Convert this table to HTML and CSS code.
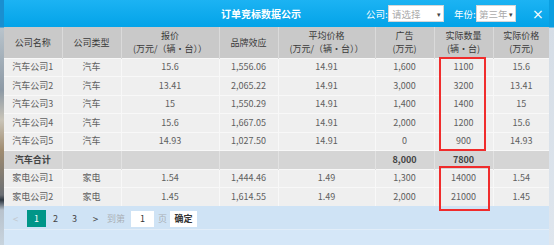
FILE: index.html
```html
<!DOCTYPE html>
<html lang="zh-CN">
<head>
<meta charset="utf-8">
<title>订单竞标数据公示</title>
<link rel="stylesheet" href="styles.css">
</head>
<body>
<div class="page">
  <div class="edge edge-left"></div>
  <div class="modal">
    <div class="titlebar">
      <div class="title">订单竞标数据公示</div>
      <div class="controls">
        <span class="lbl">公司:</span>
        <div class="select sel-company"><span class="ph">请选择</span><span class="arrow">▾</span></div>
        <span class="lbl">年份:</span>
        <div class="select sel-year"><span class="ph">第三年</span><span class="arrow">▾</span></div>
        <span class="close">×</span>
      </div>
    </div>
    <div class="tablewrap">
      <table class="grid">
        <colgroup>
          <col class="c1"><col class="c2"><col class="c3"><col class="c4"><col class="c5"><col class="c6"><col class="c7"><col class="c8">
        </colgroup>
        <thead>
          <tr>
            <th>公司名称</th>
            <th>公司类型</th>
            <th>报价<br>(万元/（辆•台））</th>
            <th>品牌效应</th>
            <th>平均价格<br>(万元/（辆•台））</th>
            <th>广告<br>(万元)</th>
            <th>实际数量<br>(辆•台)</th>
            <th>实际价格<br>(万元)</th>
          </tr>
        </thead>
        <tbody>
          <tr><td>汽车公司1</td><td>汽车</td><td>15.6</td><td>1,556.06</td><td>14.91</td><td>1,600</td><td>1100</td><td>15.6</td></tr>
          <tr><td>汽车公司2</td><td>汽车</td><td>13.41</td><td>2,065.22</td><td>14.91</td><td>3,000</td><td>3200</td><td>13.41</td></tr>
          <tr><td>汽车公司3</td><td>汽车</td><td>15</td><td>1,550.29</td><td>14.91</td><td>1,400</td><td>1400</td><td>15</td></tr>
          <tr><td>汽车公司4</td><td>汽车</td><td>15.6</td><td>1,667.05</td><td>14.91</td><td>2,000</td><td>1200</td><td>15.6</td></tr>
          <tr><td>汽车公司5</td><td>汽车</td><td>14.93</td><td>1,027.50</td><td>14.91</td><td>0</td><td>900</td><td>14.93</td></tr>
          <tr class="sum"><td>汽车合计</td><td></td><td></td><td></td><td></td><td>8,000</td><td>7800</td><td></td></tr>
          <tr><td>家电公司1</td><td>家电</td><td>1.54</td><td>1,444.46</td><td>1.49</td><td>1,300</td><td>14000</td><td>1.54</td></tr>
          <tr><td>家电公司2</td><td>家电</td><td>1.45</td><td>1,614.55</td><td>1.49</td><td>2,000</td><td>21000</td><td>1.45</td></tr>
        </tbody>
      </table>
      <div class="mark mark-a"></div>
      <div class="mark mark-b"></div>
    </div>
    <div class="pager">
      <span class="pg prev">&lt;</span>
      <span class="pg cur">1</span>
      <span class="pg">2</span>
      <span class="pg">3</span>
      <span class="pg next">&gt;</span>
      <span class="goto">到第</span>
      <span class="pinput">1</span>
      <span class="goto">页</span>
      <span class="ok">确定</span>
    </div>
    <div class="footer"></div>
  </div>
  <div class="edge edge-right"></div>
</div>
</body>
</html>
```

FILE: styles.css
```css
* { box-sizing: border-box; }
html, body { margin: 0; padding: 0; }
body {
  width: 554px;
  height: 245px;
  overflow: hidden;
  background: #dfe6ee;
  font-family: "Noto Sans CJK SC", "Noto Sans", sans-serif;
}
.page {
  display: flex;
  height: 245px;
}
.edge { flex: none; height: 245px; }
.edge-left {
  width: 4px;
  background: linear-gradient(#1a8fd0 0, #1a8fd0 27px, #b9c4cc 28px, #8d9aa6 90px, #c9c4b8 120px, #a08c70 150px, #6b6f74 195px, #2d3640 200px, #b8c2cc 210px, #c8d4de 245px);
}
.edge-right {
  width: 5px;
  background: linear-gradient(#0a9ee0 0, #0a9ee0 27px, #d5dde6 28px, #dfe6ee 245px);
}
.modal {
  flex: none;
  width: 545px;
  display: flex;
  flex-direction: column;
  background: #cfe3f5;
}
.titlebar {
  height: 27px;
  display: flex;
  align-items: center;
  background: linear-gradient(#1cb3f3, #03a3e8);
  color: #fff;
  white-space: nowrap;
}
.title {
  flex: none;
  width: 362px;
  padding-left: 217px;
  font-size: 10px;
  font-weight: bold;
}
.controls {
  flex: none;
  display: flex;
  align-items: center;
  height: 27px;
}
.controls > * { flex: none; }
.lbl {
  font-size: 9.5px;
  width: 22px;
}
.select {
  height: 17px;
  background: #fff;
  border: 1px solid #d6d6d6;
  display: flex;
  align-items: center;
  justify-content: space-between;
  padding: 0 2px 0 3px;
}
.sel-company { width: 56px; margin-right: 10px; }
.sel-year { width: 40px; padding-left: 2px; }
.ph { font-size: 9.5px; color: #aaa; }
.arrow { font-size: 7px; color: #444; }
.close {
  margin-left: 16px;
  font-size: 14px;
  line-height: 1;
  font-family: "DejaVu Sans", sans-serif;
}
.tablewrap {
  position: relative;
}
.grid {
  width: 545px;
  table-layout: fixed;
  border-collapse: collapse;
  font-size: 9px;
  color: #606060;
}
.c1 { width: 58px; }
.c2 { width: 59px; }
.c3 { width: 98px; }
.c4 { width: 59px; }
.c5 { width: 97px; }
.c6 { width: 59px; }
.c7 { width: 59px; }
.c8 { width: 56px; }
.grid th {
  height: 31px;
  padding: 0;
  background: #c9c9c9;
  color: #3a3a3a;
  font-weight: normal;
  line-height: 13px;
  border-left: 1px solid #dadada;
  text-align: center;
}
.grid th:first-child, .grid td:first-child { border-left: none; }
.grid td {
  height: 18.5px;
  padding: 0;
  text-align: center;
  background: #efefef;
  border-left: 1px solid #f8f8f8;
  border-top: 1px solid #f8f8f8;
  line-height: 12px;
  white-space: nowrap;
}
.grid tr.sum td {
  background: #d5d5d5;
  border-left-color: #e2e2e2;
  font-weight: bold;
  color: #444;
}
.mark {
  position: absolute;
  border: 2px solid #f02c2c;
}
.mark-a { left: 435px; top: 30px; width: 47px; height: 94px; }
.mark-b { left: 435px; top: 139px; width: 51px; height: 45px; }
.pager {
  height: 24px;
  padding-top: 2px;
  display: flex;
  align-items: center;
  font-size: 9px;
  color: #444;
  border-bottom: 1px solid #e2edf8;
}
.pg {
  width: 19px;
  height: 17px;
  display: flex;
  align-items: center;
  justify-content: center;
  flex: none;
}
.prev { margin-left: 2px; color: #c2c8ce; font-size: 10px; }
.cur { background: #009688; color: #fff; margin-left: 2px; }
.next { font-size: 10px; margin-left: 2px; }
.goto { color: #aab0b6; margin: 0 6px 0 2px; }
.pinput {
  width: 23px;
  height: 16px;
  background: #fff;
  display: flex;
  align-items: center;
  justify-content: center;
  color: #333;
  margin-right: 2px;
}
.ok {
  margin-left: -3px;
  width: 27px;
  height: 16px;
  background: #fff;
  display: flex;
  align-items: center;
  justify-content: center;
  font-weight: bold;
  color: #333;
}
.footer {
  flex: 1;
  background: #d5e7f8;
}
```
